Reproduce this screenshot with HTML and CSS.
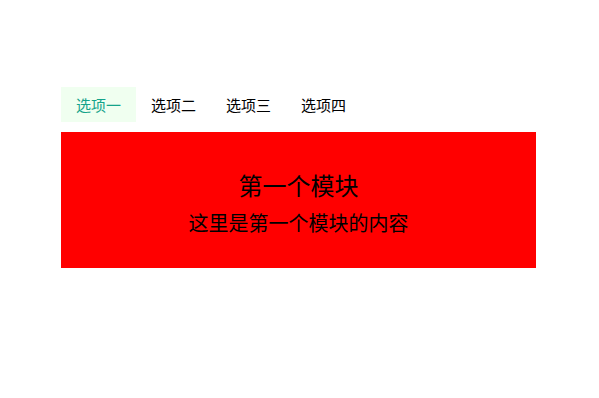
FILE: index.html
```html
<!DOCTYPE html>
<html lang="zh-CN">
<head>
<meta charset="utf-8">
<title>选项卡</title>
<link rel="stylesheet" href="styles.css">
</head>
<body>
<div class="tabs">
  <ul class="tab-list">
    <li class="tab active">选项一</li>
    <li class="tab">选项二</li>
    <li class="tab">选项三</li>
    <li class="tab">选项四</li>
  </ul>
  <div class="panel">
    <h2 class="panel-title">第一个模块</h2>
    <p class="panel-text">这里是第一个模块的内容</p>
  </div>
</div>
</body>
</html>
```

FILE: styles.css
```css
html, body {
  margin: 0;
  padding: 0;
  background: #fff;
}
body {
  font-family: "Noto Sans CJK SC", "Noto Sans", sans-serif;
  color: #000;
}
.tabs {
  width: 475px;
  margin: 87px 0 0 61px;
}
.tab-list {
  list-style: none;
  margin: 0;
  padding: 0;
  display: flex;
  height: 35px;
}
.tab {
  width: 75px;
  height: 35px;
  line-height: 35px;
  text-align: center;
  font-size: 15px;
}
.tab.active {
  background: #f0fff0;
  color: #14a38a;
}
.panel {
  margin-top: 10px;
  height: 136px;
  box-sizing: border-box;
  padding-top: 38px;
  background: #ff0000;
  display: flex;
  flex-direction: column;
  align-items: center;
}
.panel-title {
  margin: 0;
  font-size: 24px;
  font-weight: normal;
  line-height: 30px;
}
.panel-text {
  margin: 10px 0 0;
  font-size: 20px;
  line-height: 26px;
}
```
